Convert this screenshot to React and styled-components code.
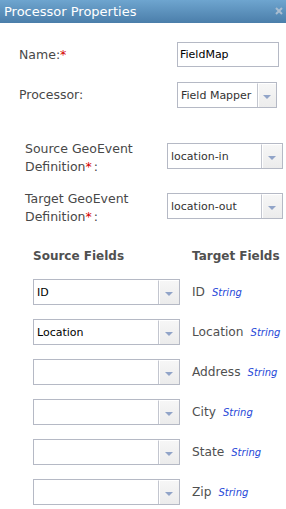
import React from 'react';
import styled, { createGlobalStyle } from 'styled-components';

const Global = createGlobalStyle`
  body {
    margin: 0;
    background: #ffffff;
    font-family: "DejaVu Sans", Verdana, sans-serif;
  }
`;

const Dialog = styled.div`
  width: 286px;
  height: 509px;
  background: #ffffff;
  overflow: hidden;
`;

const TitleBar = styled.div`
  height: 23px;
  display: flex;
  align-items: center;
  justify-content: space-between;
  padding: 0 3px 0 4px;
  background: linear-gradient(#6ea5cf, #4b7eaa);
  color: #ffffff;
  font-size: 13px;
  line-height: 23px;
`;

const Close = styled.svg`
  width: 8px;
  height: 8px;
  margin-top: -2px;
`;

const Body = styled.div`
  display: flex;
  flex-direction: column;
  padding-top: 19px;
`;

const Section = styled.div`
  display: flex;
  flex-direction: column;
  gap: ${p => p.$gap}px;
  padding-left: ${p => p.$left}px;
  margin-top: ${p => p.$top || 0}px;
`;

const Row = styled.div`
  display: flex;
  align-items: ${p => p.$top ? 'flex-start' : 'center'};
  & > :last-child {
    margin-top: ${p => p.$top ? 3 : 0}px;
  }
`;

const Label = styled.div`
  width: ${p => p.$w}px;
  flex-shrink: 0;
  color: #484848;
  font-size: 12.5px;
  line-height: 18px;
`;

const Req = styled.span`
  color: #d40000;
  margin-right: ${p => p.$gap || 0}px;
`;

const TextInput = styled.div`
  box-sizing: border-box;
  width: ${p => p.$w}px;
  height: 25px;
  border: 1px solid #b5b9c5;
  padding-left: 2px;
  display: flex;
  align-items: center;
  font-size: 11px;
  color: #000;
`;

const SelectBox = styled.div`
  box-sizing: border-box;
  width: ${p => p.$w}px;
  height: 26px;
  border: 1px solid #b5b9c5;
  display: flex;
  font-size: 11px;
  color: ${p => p.$dim ? '#333' : '#000'};
`;

const SelectText = styled.div`
  flex: 1;
  display: flex;
  align-items: center;
  padding-left: 3px;
  white-space: nowrap;
  overflow: hidden;
`;

const ArrowBtn = styled.div`
  width: ${p => p.$w}px;
  flex-shrink: 0;
  border-left: 1px solid #c3c6cf;
  border-top: 1px solid #fff;
  box-shadow: inset 1px 0 0 #fff;
  background: linear-gradient(#f6f6f6, #ececec);
  display: flex;
  align-items: center;
  justify-content: center;
  &::after {
    content: '';
    width: 0;
    height: 0;
    border-left: 4px solid transparent;
    border-right: 4px solid transparent;
    border-top: 4px solid #91a4c8;
    margin-top: 2px;
  }
`;

const Header = styled.div`
  display: flex;
  font-weight: bold;
  color: #505050;
  font-size: 12px;
  line-height: 16px;
`;

const HeadCell = styled.div`
  width: ${p => p.$w}px;
`;

const Target = styled.div`
  margin-left: 12px;
  color: #505050;
  font-size: 12.2px;
  white-space: nowrap;
`;

const Type = styled.span`
  margin-left: 7px;
  color: #2648d8;
  font-style: italic;
  font-size: 10px;
`;

const Select = ({ w, arrow = 19, value, dim }) => (
  <SelectBox $w={w} $dim={dim}>
    <SelectText>{value}</SelectText>
    <ArrowBtn $w={arrow} />
  </SelectBox>
);

const fields = [
  { src: 'ID', target: 'ID' },
  { src: 'Location', target: 'Location' },
  { src: '', target: 'Address' },
  { src: '', target: 'City' },
  { src: '', target: 'State' },
  { src: '', target: 'Zip' },
];

export default function App() {
  return (
    <Dialog>
      <Global />
      <TitleBar>
        <span>Processor Properties</span>
        <Close viewBox="0 0 8 8">
          <path d="M1 1 L7 7 M7 1 L1 7" stroke="#a9bdd0" strokeWidth="2" />
        </Close>
      </TitleBar>
      <Body>
        <Section $gap={15} $left={19}>
          <Row>
            <Label $w={158}>Name:<Req>*</Req></Label>
            <TextInput $w={102}>FieldMap</TextInput>
          </Row>
          <Row>
            <Label $w={158}>Processor:</Label>
            <Select w={100} arrow={18} value="Field Mapper" dim />
          </Row>
        </Section>
        <Section $gap={14} $left={25} $top={32}>
          <Row $top>
            <Label $w={142}>Source GeoEvent Definition<Req $gap={2}>*</Req>:</Label>
            <Select w={116} arrow={20} value="location-in" dim />
          </Row>
          <Row $top>
            <Label $w={142}>Target GeoEvent Definition<Req $gap={2}>*</Req>:</Label>
            <Select w={116} arrow={20} value="location-out" dim />
          </Row>
        </Section>
        <Section $gap={14} $left={33} $top={22}>
          <Header>
            <HeadCell $w={159}>Source Fields</HeadCell>
            <HeadCell>Target Fields</HeadCell>
          </Header>
          <Section $gap={14} $left={0} $top={1}>
            {fields.map(f => (
              <Row key={f.target}>
                <Select w={147} arrow={20} value={f.src} />
                <Target>{f.target}<Type>String</Type></Target>
              </Row>
            ))}
          </Section>
        </Section>
      </Body>
    </Dialog>
  );
}
